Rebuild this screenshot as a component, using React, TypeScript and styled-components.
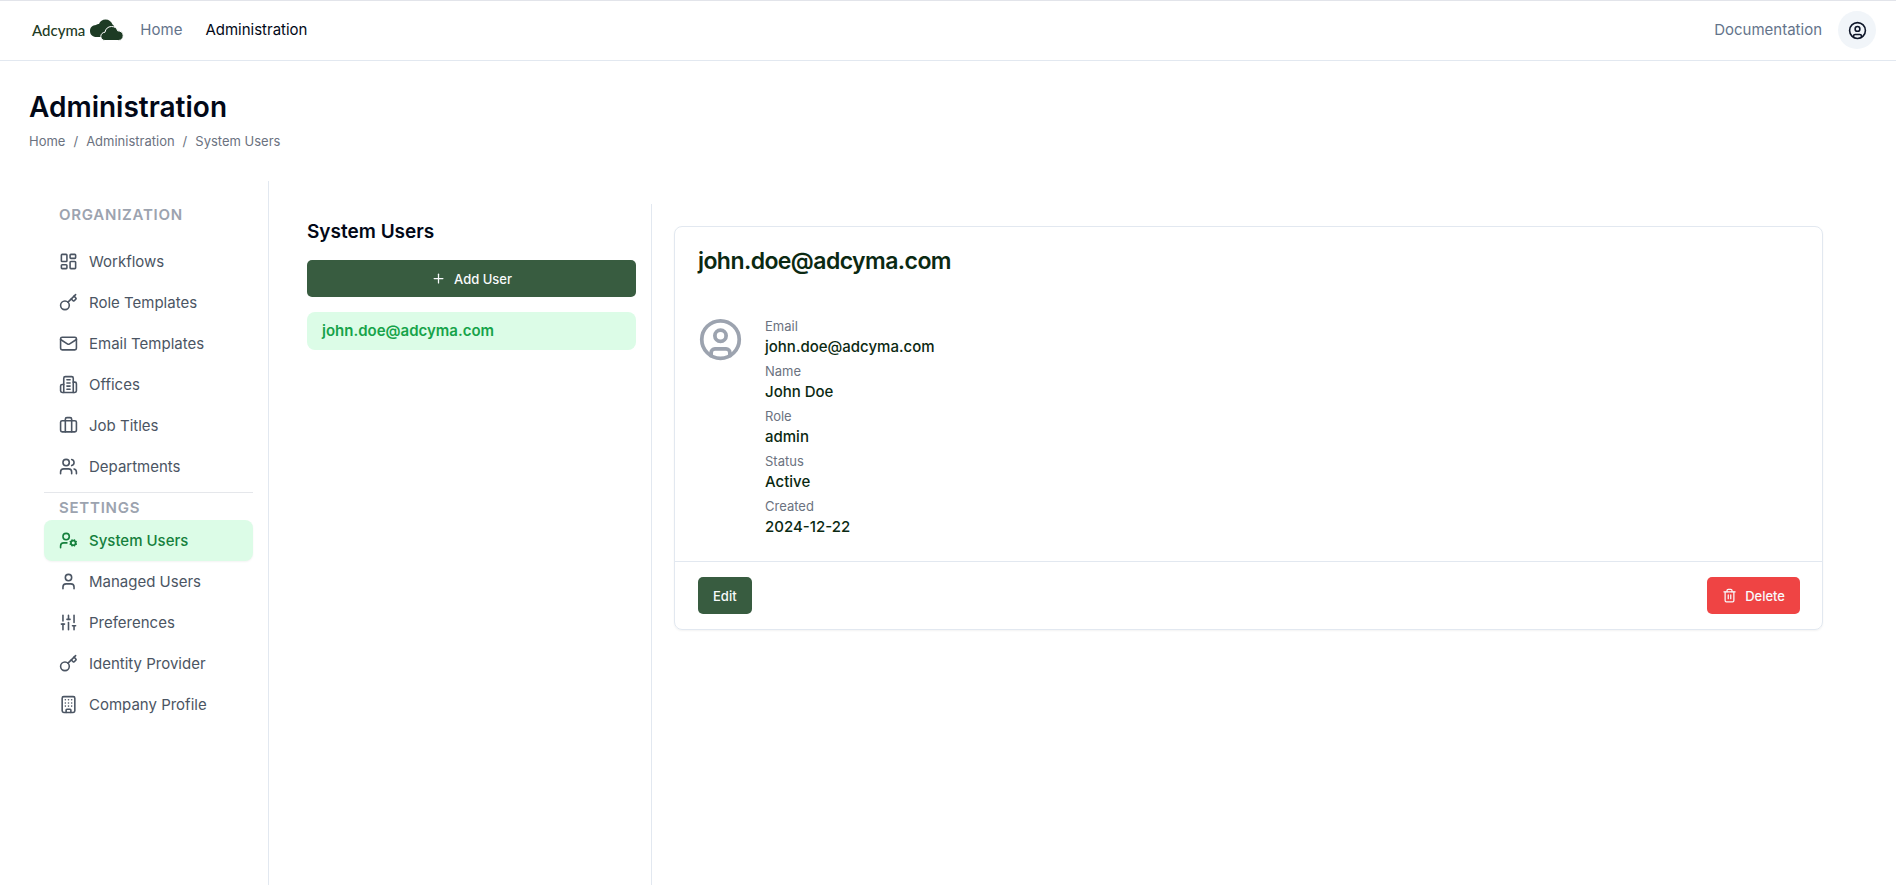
import React from "react";
import styled, { createGlobalStyle, css } from "styled-components";
import {
  Briefcase,
  Building,
  CircleUser,
  Key,
  LayoutDashboard,
  Mail,
  Plus,
  SlidersVertical,
  Trash2,
  User,
  UserCog,
  Users,
} from "lucide-react";

const GlobalStyle = createGlobalStyle`
  *, *::before, *::after { box-sizing: border-box; }
  html, body, #root { min-height: 100vh; }
  body {
    margin: 0;
    background: #ffffff;
    color: #020817;
    font-family: Inter, "Liberation Sans", sans-serif;
    font-size: 15px;
    line-height: 22px;
  }
  h1, h2, h3, p, ul, ol, dl, dd { margin: 0; padding: 0; }
  ul, ol { list-style: none; }
  a { color: inherit; text-decoration: none; }
  button { font: inherit; cursor: pointer; }
`;

const Page = styled.div`
  display: flex;
  flex-direction: column;
  min-height: 100vh;
`;

const TopBar = styled.header`
  display: flex;
  align-items: center;
  justify-content: space-between;
  height: 61px;
  padding: 0 20px 1px 32px;
  border-top: 1px solid #e2e4ea;
  border-bottom: 1px solid #e2e8f0;
`;

const TopGroup = styled.div`
  display: flex;
  align-items: center;
  gap: 16px;
`;

const TopNav = styled.nav`
  display: flex;
  gap: 23px;
`;

const TopLink = styled.a<{ $current?: boolean }>`
  color: ${(p) => (p.$current ? "#020817" : "#64748b")};
`;

const LogoLink = styled.a`
  display: flex;
  align-items: center;
  gap: 4px;
  color: #1d3b24;
  font-family: Lato, sans-serif;
  font-size: 15px;
  font-weight: 500;
`;

const AvatarButton = styled.button`
  display: grid;
  place-items: center;
  width: 38px;
  height: 38px;
  padding: 0;
  border: 0;
  border-radius: 50%;
  background: #f1f5f9;
  color: #0f172a;
`;

const Heading = styled.div`
  padding: 29px 29px 0;
`;

const PageTitle = styled.h1`
  font-size: 28px;
  line-height: 34px;
  font-weight: 600;
`;

const Crumbs = styled.ol`
  display: flex;
  gap: 8px;
  margin-top: 7px;
  color: #6b7280;
  font-size: 13px;
  line-height: 20px;
`;

const Body = styled.div`
  display: flex;
  flex: 1;
  margin-top: 30px;
  padding: 0 73px 0 29px;
`;

const Sidebar = styled.aside`
  width: 240px;
  flex: none;
  padding: 22px 15px 0;
  border-right: 1px solid #e2e8f0;
`;

const GroupTitle = styled.h2<{ $spaced?: boolean }>`
  padding: 0 15px;
  margin-bottom: ${(p) => (p.$spaced ? "14px" : "0")};
  color: #9ca3af;
  font-size: 15px;
  line-height: 24px;
  font-weight: 600;
  letter-spacing: 0.05em;
  text-transform: uppercase;
`;

const SideList = styled.ul<{ $divided?: boolean }>`
  ${(p) =>
    p.$divided &&
    css`
      padding-bottom: 5px;
      margin-bottom: 3px;
      border-bottom: 1px solid #e5e7eb;
    `}
`;

const SideLink = styled.a<{ $active?: boolean }>`
  display: flex;
  align-items: center;
  gap: 11px;
  height: 41px;
  padding: 0 15px;
  border-radius: 8px;
  color: #4b5563;
  ${(p) =>
    p.$active &&
    css`
      background: #dcfce7;
      color: #15803d;
      font-weight: 500;
      box-shadow: 0 1px 2px rgba(0, 0, 0, 0.05);
    `}
`;

const UsersColumn = styled.section`
  width: 383px;
  flex: none;
  margin-top: 23px;
  padding: 15px 15px 0 38px;
  border-right: 1px solid #e2e8f0;
`;

const ColumnTitle = styled.h2`
  margin-bottom: 15px;
  font-size: 19px;
  line-height: 26px;
  font-weight: 600;
`;

const Button = styled.button<{ $tone?: "danger"; $wide?: boolean }>`
  display: flex;
  align-items: center;
  justify-content: center;
  gap: 8px;
  width: ${(p) => (p.$wide ? "100%" : "auto")};
  height: 37px;
  padding: 0 15px;
  border: 0;
  border-radius: 5px;
  background: ${(p) => (p.$tone === "danger" ? "#ef4444" : "#385c40")};
  color: #f8fafc;
  font-size: 13px;
  font-weight: 500;
`;

const UserEntry = styled.a`
  display: flex;
  align-items: center;
  height: 38px;
  margin-top: 15px;
  padding: 0 15px;
  border-radius: 8px;
  background: #dcfce7;
  color: #16a34a;
  font-weight: 600;
`;

const Detail = styled.main`
  flex: 1;
  min-width: 0;
  padding: 45px 0 0 22px;
`;

const Card = styled.article`
  border: 1px solid #e2e8f0;
  border-radius: 8px;
  box-shadow: 0 1px 2px rgba(0, 0, 0, 0.05);
  color: #0b2912;
`;

const CardTitle = styled.h3`
  padding: 21px 23px 0;
  font-size: 23px;
  line-height: 26px;
  font-weight: 600;
  letter-spacing: -0.025em;
`;

const CardBody = styled.div`
  display: flex;
  align-items: flex-start;
  gap: 22px;
  padding: 43px 23px 23px;
  & > svg { color: #9ca3af; }
`;

const Fields = styled.dl`
  display: grid;
  row-gap: 4px;
`;

const Term = styled.dt`
  color: #6b7280;
  font-size: 13px;
  line-height: 19px;
`;

const Value = styled.dd`
  line-height: 22px;
  font-weight: 500;
`;

const CardFooter = styled.footer`
  display: flex;
  justify-content: space-between;
  padding: 15px 22px 15px 23px;
  border-top: 1px solid #e2e8f0;
`;

function CloudMark() {
  return (
    <svg width="35" height="22" viewBox="0 0 34 22" aria-hidden="true">
      <path
        fill="#1d3b24"
        d="M7 18C3 18 .5 15.500 .5 12S3 6.200 6.500 6C7.500 5 8.500 5 9.500 5C10.500 2 13 .5 16 .5C19.500 .5 22 2.500 23 5.500C24 6 24.500 7 24.800 8L20 18Z"
      />
      <path
        fill="#1d3b24"
        stroke="#ffffff"
        strokeWidth="1"
        d="M15.500 21.500C13 21.500 11.300 19.800 11.300 17.500C11.300 15 13 13.500 15.500 13.200C16 9.800 18.500 7.500 22 7.500C25 7.500 27.500 9 28.200 11.800C31.500 11.800 33.700 13.800 33.700 16.700C33.700 19.500 31.800 21.500 28.800 21.500Z"
      />
    </svg>
  );
}

function OfficeIcon({ size }: { size: number }) {
  return (
    <svg
      width={size}
      height={size}
      viewBox="0 0 24 24"
      fill="none"
      stroke="currentColor"
      strokeWidth="2"
      strokeLinecap="round"
      strokeLinejoin="round"
      aria-hidden="true"
    >
      <path d="M6 22V4a2 2 0 0 1 2-2h8a2 2 0 0 1 2 2v18Z" />
      <path d="M6 12H4a2 2 0 0 0-2 2v6a2 2 0 0 0 2 2h2" />
      <path d="M18 9h2a2 2 0 0 1 2 2v9a2 2 0 0 1-2 2h-2" />
      <path d="M10 6h4M10 10h4M10 14h4M10 18h4" />
    </svg>
  );
}

type Entry = { label: string; icon: React.ElementType; active?: boolean };

const organization: Entry[] = [
  { label: "Workflows", icon: LayoutDashboard },
  { label: "Role Templates", icon: Key },
  { label: "Email Templates", icon: Mail },
  { label: "Offices", icon: OfficeIcon },
  { label: "Job Titles", icon: Briefcase },
  { label: "Departments", icon: Users },
];

const settings: Entry[] = [
  { label: "System Users", icon: UserCog, active: true },
  { label: "Managed Users", icon: User },
  { label: "Preferences", icon: SlidersVertical },
  { label: "Identity Provider", icon: Key },
  { label: "Company Profile", icon: Building },
];

const fields = [
  ["Email", "john.doe@adcyma.com"],
  ["Name", "John Doe"],
  ["Role", "admin"],
  ["Status", "Active"],
  ["Created", "2024-12-22"],
];

function SideGroup({ entries, divided }: { entries: Entry[]; divided?: boolean }) {
  return (
    <SideList $divided={divided}>
      {entries.map(({ label, icon: Icon, active }) => (
        <li key={label}>
          <SideLink href="#" $active={active} aria-current={active ? "page" : undefined}>
            <Icon size={19} />
            {label}
          </SideLink>
        </li>
      ))}
    </SideList>
  );
}

export default function App() {
  return (
    <Page>
      <GlobalStyle />
      <TopBar>
        <TopGroup>
          <LogoLink href="#">
            Adcyma
            <CloudMark />
          </LogoLink>
          <TopNav aria-label="Main">
            <TopLink href="#">Home</TopLink>
            <TopLink href="#" $current>
              Administration
            </TopLink>
          </TopNav>
        </TopGroup>
        <TopGroup>
          <TopLink href="#">Documentation</TopLink>
          <AvatarButton type="button" aria-label="Account">
            <CircleUser size={19} />
          </AvatarButton>
        </TopGroup>
      </TopBar>

      <Heading>
        <PageTitle>Administration</PageTitle>
        <nav aria-label="Breadcrumb">
          <Crumbs>
            <li><a href="#">Home</a></li>
            <li aria-hidden="true">/</li>
            <li><a href="#">Administration</a></li>
            <li aria-hidden="true">/</li>
            <li>System Users</li>
          </Crumbs>
        </nav>
      </Heading>

      <Body>
        <Sidebar>
          <GroupTitle $spaced>Organization</GroupTitle>
          <SideGroup entries={organization} divided />
          <GroupTitle>Settings</GroupTitle>
          <SideGroup entries={settings} />
        </Sidebar>

        <UsersColumn>
          <ColumnTitle>System Users</ColumnTitle>
          <Button type="button" $wide>
            <Plus size={15} />
            Add User
          </Button>
          <UserEntry href="#">john.doe@adcyma.com</UserEntry>
        </UsersColumn>

        <Detail>
          <Card>
            <CardTitle>john.doe@adcyma.com</CardTitle>
            <CardBody>
              <CircleUser size={45} />
              <Fields>
                {fields.map(([term, value]) => (
                  <div key={term}>
                    <Term>{term}</Term>
                    <Value>{value}</Value>
                  </div>
                ))}
              </Fields>
            </CardBody>
            <CardFooter>
              <Button type="button">Edit</Button>
              <Button type="button" $tone="danger">
                <Trash2 size={15} />
                Delete
              </Button>
            </CardFooter>
          </Card>
        </Detail>
      </Body>
    </Page>
  );
}
